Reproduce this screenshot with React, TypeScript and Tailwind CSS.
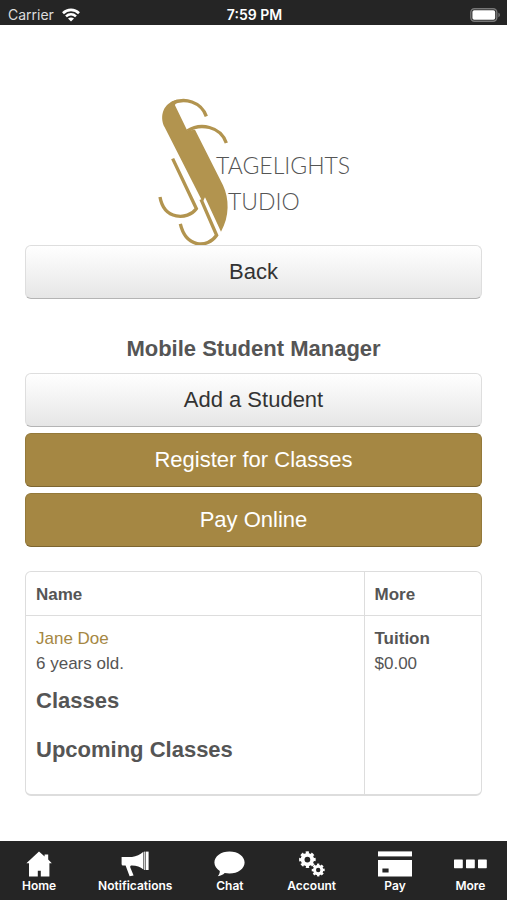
import type { ReactNode } from "react"

const Logo = () => (
  <svg width="195" height="148" viewBox="-2 -1 195 148" className="mx-auto block" role="img" aria-label="Stagelights Studio">
    <g transform="scale(0.3333) translate(-24 -24)">
      <path
        fill="#b2944f"
        d="M75 46 L112 122 L135 119 L219 286 C238 326 239 380 213 425 L165 322 L158 336 L44 112 C26 76 42 38 80 29 Z"
      />
      <g fill="none" stroke="#b2944f" strokeWidth="10">
        <path d="M64 41 C104 20 154 36 169 79" />
        <path d="M112 123 C150 98 212 108 229 159" />
        <path d="M68 206 L139 356 C112 392 42 390 30 321" />
        <path d="M153 328 L200 436 C172 476 108 474 91 402" />
      </g>
    </g>
    <g fill="#555" className="font-['Lato',sans-serif] text-[23px] font-light">
      <text x="58" y="76">TAGELIGHTS</text>
      <text x="70" y="112">TUDIO</text>
    </g>
  </svg>
)

const WifiIcon = () => (
  <svg width="18" height="14" viewBox="0 0 18 14" fill="none" stroke="#fff" strokeWidth="2.6" aria-hidden="true">
    <path d="M1 5.2 C5.5 0.8 12.5 0.8 17 5.2" />
    <path d="M4 8.4 C7 5.6 11 5.6 14 8.4" />
    <path d="M9 13.6 L6 10.6 C7.8 9.1 10.2 9.1 12 10.6 Z" fill="#fff" stroke="none" />
  </svg>
)

const BatteryIcon = () => (
  <svg width="31" height="14" viewBox="0 0 31 14" aria-hidden="true">
    <rect x="0.8" y="0.8" width="26" height="12.4" rx="3.6" fill="none" stroke="#777" strokeWidth="1.4" />
    <rect x="2.4" y="2.2" width="22.8" height="9.6" rx="1.8" fill="#fff" />
    <path d="M28.4 4.8 C30.4 5.4 30.4 8.6 28.4 9.2 Z" fill="#777" />
  </svg>
)

const HomeIcon = () => (
  <svg width="26" height="26" viewBox="0 0 26 26" fill="#fff" aria-hidden="true">
    <path d="M13 0.6 L18.6 5.4 V3.6 H22.2 V8.6 L25.8 12.2 H23.4 V25.4 H14.8 V19.8 H11.8 V25.4 H3 V12.2 H0.4 Z" />
  </svg>
)

const MegaphoneIcon = () => (
  <svg width="28" height="26" viewBox="0 0 28 26" fill="#fff" aria-hidden="true">
    <path d="M0.6 6 H11 C15.5 5.6 19 3.6 22.4 0.8 V18.4 C19.4 16 15.5 14.8 11 14.6 C9.4 14.6 9 15.2 9.3 16.4 L12.6 24.4 L8.6 25.2 L4.6 14.6 H2 Q0.6 14.6 0.6 13 Z" />
    <rect x="23" y="0.6" width="0.8" height="18.4" />
    <rect x="24.6" y="0.6" width="3" height="18.4" />
  </svg>
)

const ChatIcon = () => (
  <svg width="31" height="26" viewBox="0 0 31 26" fill="#fff" aria-hidden="true">
    <path d="M15.5 0.6 C24 0.6 30.6 5.4 30.6 11.6 C30.6 17.8 24 22.6 15.5 22.6 C13.8 22.6 12.2 22.4 10.7 22.1 C9 23.8 6.8 25 3.8 25.2 C5.2 23.6 5.9 21.8 5.8 20 C2.6 18 0.4 15 0.4 11.6 C0.4 5.4 7 0.6 15.5 0.6 Z" />
  </svg>
)

const GearsIcon = () => (
  <svg width="26" height="26" viewBox="0 0 26 26" fill="none" stroke="#fff" aria-hidden="true">
    <circle cx="8.4" cy="8.6" r="4.8" strokeWidth="3.8" />
    <circle cx="8.4" cy="8.6" r="7" strokeWidth="2.6" pathLength="16" strokeDasharray="1.15 0.85" strokeDashoffset="0.6" />
    <circle cx="19.2" cy="19" r="3.7" strokeWidth="3" />
    <circle cx="19.2" cy="19" r="5.4" strokeWidth="2.2" pathLength="16" strokeDasharray="1.15 0.85" strokeDashoffset="0.6" />
  </svg>
)

const CardIcon = () => (
  <svg width="34" height="26" viewBox="0 0 34 26" fill="#fff" aria-hidden="true">
    <rect y="0.4" width="34" height="5" />
    <path d="M0 9 H34 V25.6 H0 Z M4.4 17.4 V21.4 H10.6 V17.4 Z" fillRule="evenodd" />
  </svg>
)

const MoreIcon = () => (
  <svg width="33" height="26" viewBox="0 0 33 26" fill="#fff" aria-hidden="true">
    <rect x="0" y="8.4" width="8.8" height="8.8" rx="0.6" />
    <rect x="12" y="8.4" width="8.8" height="8.8" rx="0.6" />
    <rect x="24" y="8.4" width="8.8" height="8.8" rx="0.6" />
  </svg>
)

const navItems: { label: string; icon: ReactNode }[] = [
  { label: "Home", icon: <HomeIcon /> },
  { label: "Notifications", icon: <MegaphoneIcon /> },
  { label: "Chat", icon: <ChatIcon /> },
  { label: "Account", icon: <GearsIcon /> },
  { label: "Pay", icon: <CardIcon /> },
  { label: "More", icon: <MoreIcon /> },
]

const Button = ({ children, primary = false }: { children: ReactNode; primary?: boolean }) => (
  <button
    type="button"
    className={`w-full rounded-md border py-3 text-[22px] leading-7 ${
      primary
        ? "border-[#94793a] border-b-[#7d6530] bg-[#a58743] text-white"
        : "border-[#dedede] border-b-[#b4b4b4] bg-linear-to-b from-white to-[#e6e6e6] text-[#333]"
    }`}
  >
    {children}
  </button>
)

const App = () => {
  return (
    <div className="flex min-h-screen flex-col bg-white font-['Liberation_Sans',Arial,sans-serif] text-[#555]">
      {/* Status bar */}
      <header className="grid h-[25px] grid-cols-3 items-center bg-[#252525] pt-1 pr-1.5 pl-2 font-['Inter',sans-serif] text-sm leading-5 text-white">
        <div className="flex items-center gap-2 text-[#ddd]">
          <span>Carrier</span>
          <WifiIcon />
        </div>
        <span className="text-center font-semibold">7:59 PM</span>
        <div className="flex justify-end">
          <BatteryIcon />
        </div>
      </header>

      <main className="px-[25px] pt-[72px] pb-11">
        <Logo />
        <Button>Back</Button>

        <h1 className="mt-9 mb-2.5 text-center text-[22px] leading-7 font-bold">Mobile Student Manager</h1>

        <div className="flex flex-col gap-1.5">
          <Button>Add a Student</Button>
          <Button primary>Register for Classes</Button>
          <Button primary>Pay Online</Button>
        </div>

        {/* Students */}
        <div className="mt-6 overflow-hidden rounded-md border border-b-2 border-[#ddd]">
          <table className="w-full text-left text-[17px] leading-[25px]">
            <thead>
              <tr className="border-b border-[#ddd]">
                <th className="px-2.5 pt-2.5 pb-2 font-bold">Name</th>
                <th className="w-[117px] border-l border-[#ddd] px-2.5 pt-2.5 pb-2 font-bold">More</th>
              </tr>
            </thead>
            <tbody>
              <tr className="align-top">
                <td className="px-2.5 pt-2.5 pb-8">
                  <a href="#student" className="text-[#a58743]">
                    Jane Doe
                  </a>
                  <p>6 years old.</p>
                  <h2 className="mt-3 text-[22px] font-bold">Classes</h2>
                  <h2 className="mt-6 text-[22px] font-bold">Upcoming Classes</h2>
                </td>
                <td className="border-l border-[#ddd] px-2.5 pt-2.5">
                  <strong>Tuition</strong>
                  <p>$0.00</p>
                </td>
              </tr>
            </tbody>
          </table>
        </div>
      </main>

      {/* Tab bar */}
      <nav className="mt-auto flex justify-between bg-[#252525] pt-2.5 pr-5 pb-1.5 pl-[22px] font-['Inter',sans-serif] text-xs leading-4 font-semibold text-white">
        {navItems.map((item) => (
          <a key={item.label} href={`#${item.label.toLowerCase()}`} className="flex flex-col items-center gap-px">
            {item.icon}
            <span>{item.label}</span>
          </a>
        ))}
      </nav>
    </div>
  )
}

export default App
